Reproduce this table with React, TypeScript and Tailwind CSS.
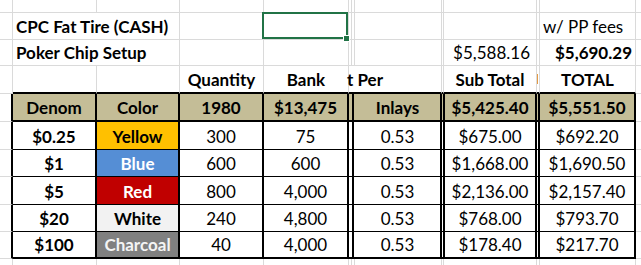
import React from 'react'

// gridline + table border styles
const grid = 'border-r border-b border-[#dadada]'
const gridNoR = 'border-b border-[#dadada]'
const topRow = 'border-r border-r-[#dadada] border-b-2 border-b-black'
const edgeL = 'border-r-2 border-r-black border-b border-b-[#dadada]'

function Cell({ w, className = '', children }: { w: string; className?: string; children?: React.ReactNode }) {
  return (
    <div className={`${w} shrink-0 h-full flex items-end pb-[4px] leading-none whitespace-nowrap ${className}`}>
      {children}
    </div>
  )
}

type Chip = {
  denom: string
  color: string
  bg: string
  text: string
  qty: string
  bank: string
  sub: string
  total: string
  h: string
  last?: boolean
}

const chips: Chip[] = [
  { denom: '$0.25', color: 'Yellow', bg: 'bg-[#ffc000]', text: 'text-black', qty: '300', bank: '75', sub: '$675.00', total: '$692.20', h: 'h-[28px]' },
  { denom: '$1', color: 'Blue', bg: 'bg-[#558ed5]', text: 'text-white', qty: '600', bank: '600', sub: '$1,668.00', total: '$1,690.50', h: 'h-[27px]' },
  { denom: '$5', color: 'Red', bg: 'bg-[#c00000]', text: 'text-white', qty: '800', bank: '4,000', sub: '$2,136.00', total: '$2,157.40', h: 'h-[28px]' },
  { denom: '$20', color: 'White', bg: 'bg-[#f2f2f2]', text: 'text-black', qty: '240', bank: '4,800', sub: '$768.00', total: '$793.70', h: 'h-[27px]' },
  { denom: '$100', color: 'Charcoal', bg: 'bg-[#808080]', text: 'text-[#f4f4f4]', qty: '40', bank: '4,000', sub: '$178.40', total: '$217.70', h: 'h-[27px]', last: true },
]

function DataRow({ c }: { c: Chip }) {
  const b = c.last ? 'border-b-2 border-black' : 'border-b border-black'
  return (
    <div className={`flex ${c.h}`}>
      <Cell w="w-[13px]" className={edgeL} />
      <Cell w="w-[84px]" className={`${b} border-r-2 justify-center font-bold`}>{c.denom}</Cell>
      <Cell w="w-[83px]" className={`${b} border-r-2 justify-center font-bold ${c.bg} ${c.text}`}>{c.color}</Cell>
      <Cell w="w-[84px]" className={`${b} border-r-2 justify-center`}>{c.qty}</Cell>
      <Cell w="w-[85px]" className={`${b} border-r-2 justify-center`}>{c.bank}</Cell>
      <Cell w="w-[3px]" className={b} />
      <Cell w="w-[3px]" className={`${b} border-l-2`} />
      <Cell w="w-[87px]" className={`${b} border-r-2 justify-center`}>0.53</Cell>
      <Cell w="w-[2px]" className={`${b} border-r`} />
      <Cell w="w-[93px]" className={`${b} border-l border-r-2 justify-center`}>{c.sub}</Cell>
      <Cell w="w-[3px]" className={`${b} border-r-2`} />
      <Cell w="w-[96px]" className={`${b} border-r-2 justify-center`}>{c.total}</Cell>
      <Cell w="flex-1" className={gridNoR} />
    </div>
  )
}

export default function App() {
  const hb = 'border-b-2 border-black bg-[#c4bd97] font-bold'
  return (
    <div className="w-[641px] h-[265px] overflow-hidden bg-white text-black text-[17px] font-['Lato',sans-serif]">
      {/* row 1 */}
      <div className="flex h-[13px]">
        <Cell w="w-[13px]" className={grid} />
        <Cell w="w-[84px]" className={grid} />
        <Cell w="w-[83px]" className={grid} />
        <Cell w="w-[84px]" className={grid} />
        <Cell w="w-[85px]" className={grid} />
        <Cell w="w-[3px]" className={grid} />
        <Cell w="w-[3px]" className={grid} />
        <Cell w="w-[87px]" className={grid} />
        <Cell w="w-[2px]" className={grid} />
        <Cell w="w-[93px]" className={grid} />
        <Cell w="w-[3px]" className={grid} />
        <Cell w="w-[96px]" className={grid} />
        <Cell w="flex-1" className={gridNoR} />
      </div>

      {/* row 2 */}
      <div className="flex h-[27px]">
        <Cell w="w-[13px]" className={grid} />
        <Cell w="w-[84px]" className={`${gridNoR} pl-[3px] font-bold`}>CPC Fat Tire (CASH)</Cell>
        <Cell w="w-[83px]" className={grid} />
        <Cell w="w-[84px]" className={grid} />
        <Cell w="w-[85px]" className={`${grid} relative`}>
          <div className="absolute -left-[2px] -top-[1px] right-0 bottom-0 border-2 border-[#217346] z-10 pointer-events-none">
            <div className="absolute right-[-4px] bottom-[-5px] w-[7px] h-[7px] bg-[#217346] border border-white" />
          </div>
        </Cell>
        <Cell w="w-[3px]" className={grid} />
        <Cell w="w-[3px]" className={grid} />
        <Cell w="w-[87px]" className={grid} />
        <Cell w="w-[2px]" className={grid} />
        <Cell w="w-[93px]" className={grid} />
        <Cell w="w-[3px]" className={grid} />
        <Cell w="w-[96px]" className={`${grid} pl-[3px]`}>w/ PP fees</Cell>
        <Cell w="flex-1" className={gridNoR} />
      </div>

      {/* row 3 */}
      <div className="flex h-[26px]">
        <Cell w="w-[13px]" className={grid} />
        <Cell w="w-[84px]" className={`${gridNoR} pl-[3px] font-bold`}>Poker Chip Setup</Cell>
        <Cell w="w-[83px]" className={grid} />
        <Cell w="w-[84px]" className={grid} />
        <Cell w="w-[85px]" className={grid} />
        <Cell w="w-[3px]" className={grid} />
        <Cell w="w-[3px]" className={grid} />
        <Cell w="w-[87px]" className={grid} />
        <Cell w="w-[2px]" className={grid} />
        <Cell w="w-[93px]" className={`${grid} justify-end pr-[6px]`}>$5,588.16</Cell>
        <Cell w="w-[3px]" className={grid} />
        <Cell w="w-[96px]" className={`${grid} justify-end pr-[3px] font-bold`}>$5,690.29</Cell>
        <Cell w="flex-1" className={gridNoR} />
      </div>

      {/* row 4 */}
      <div className="flex h-[28px]">
        <Cell w="w-[13px]" className={grid} />
        <Cell w="w-[84px]" className={topRow} />
        <Cell w="w-[83px]" className={topRow} />
        <Cell w="w-[84px]" className={`${topRow} justify-center font-bold`}>Quantity</Cell>
        <Cell w="w-[85px]" className={`${topRow} justify-center font-bold`}>Bank</Cell>
        <Cell w="w-[93px]" className={`${topRow} font-bold`}>
          <span className="-ml-[2px]">t Per</span>
        </Cell>
        <Cell w="w-[2px]" className={topRow} />
        <Cell w="w-[93px]" className={`${topRow} justify-center font-bold`}>Sub Total</Cell>
        <Cell w="w-[3px]" className={topRow}>
          <span className="block w-[1px] h-[10px] mb-[4px] bg-[#e39a45]" />
        </Cell>
        <Cell w="w-[96px]" className={`${topRow} justify-center font-bold`}>TOTAL</Cell>
        <Cell w="flex-1" className={gridNoR} />
      </div>

      {/* header row */}
      <div className="flex h-[28px]">
        <Cell w="w-[13px]" className={edgeL} />
        <Cell w="w-[84px]" className={`${hb} border-r-2 justify-center`}>Denom</Cell>
        <Cell w="w-[83px]" className={`${hb} border-r-2 justify-center`}>Color</Cell>
        <Cell w="w-[84px]" className={`${hb} border-r-2 justify-center`}>1980</Cell>
        <Cell w="w-[85px]" className={`${hb} border-r-2 justify-center`}>$13,475</Cell>
        <Cell w="w-[3px]" className={hb} />
        <Cell w="w-[3px]" className={`${hb} border-l-2`} />
        <Cell w="w-[87px]" className={`${hb} border-r-2 justify-center`}>Inlays</Cell>
        <Cell w="w-[2px]" className={`${hb} border-r`} />
        <Cell w="w-[93px]" className={`${hb} border-l border-r-2 justify-center`}>$5,425.40</Cell>
        <Cell w="w-[3px]" className={`${hb} border-r-2`} />
        <Cell w="w-[96px]" className={`${hb} border-r-2 justify-center`}>$5,551.50</Cell>
        <Cell w="flex-1" className={gridNoR} />
      </div>

      {chips.map(c => (
        <DataRow key={c.denom} c={c} />
      ))}

      {/* row below table */}
      <div className="flex h-[20px]">
        <Cell w="w-[13px]" className={grid} />
        <Cell w="w-[84px]" className={grid} />
        <Cell w="w-[83px]" className={grid} />
        <Cell w="w-[84px]" className={grid} />
        <Cell w="w-[85px]" className={grid} />
        <Cell w="w-[3px]" className={grid} />
        <Cell w="w-[3px]" className={grid} />
        <Cell w="w-[87px]" className={grid} />
        <Cell w="w-[2px]" className={grid} />
        <Cell w="w-[93px]" className={grid} />
        <Cell w="w-[3px]" className={grid} />
        <Cell w="w-[96px]" className={grid} />
        <Cell w="flex-1" className={gridNoR} />
      </div>
    </div>
  )
}
